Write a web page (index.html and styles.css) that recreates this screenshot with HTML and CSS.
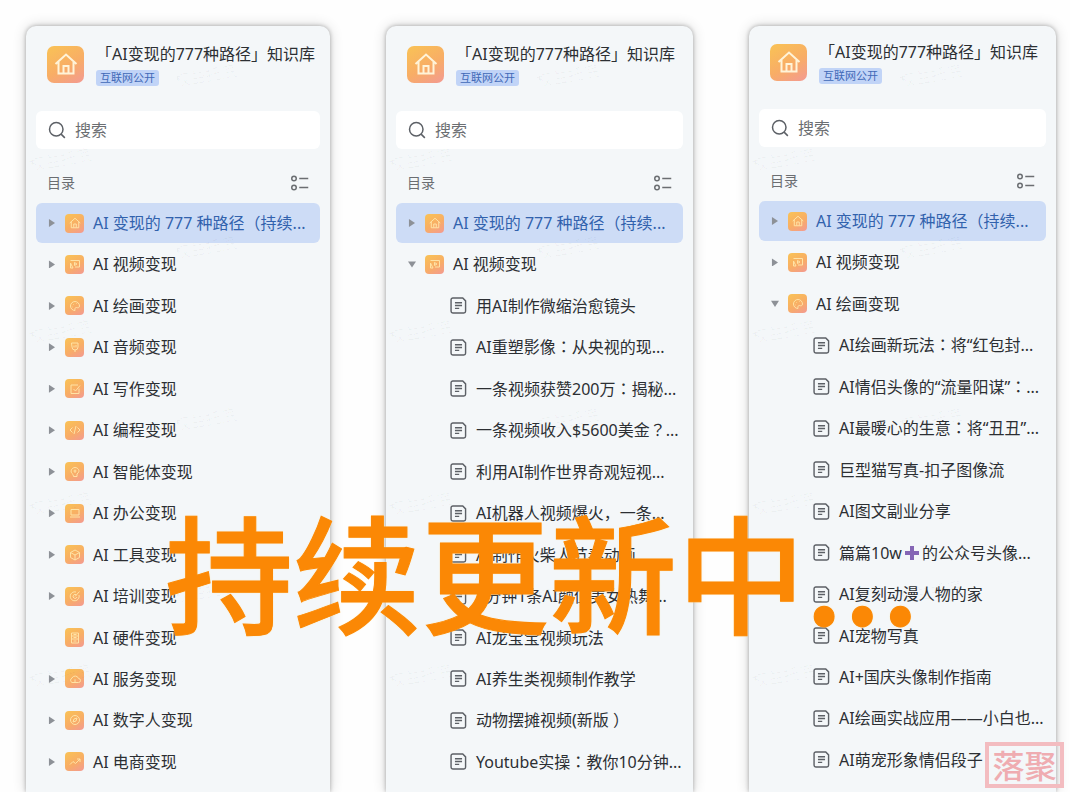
FILE: index.html
```
<!DOCTYPE html>
<html lang="zh-CN">

<head>
    <meta charset="UTF-8">
    <meta name="viewport" content="width=device-width, initial-scale=1.0">
    <title>「AI变现的777种路径」知识库</title>
    <link rel="stylesheet" href="styles.css">
</head>

<body>
    <svg class="sprite" aria-hidden="true">
        <symbol id="home" viewBox="0 0 24 24"><path d="M1.5 12 12 2.5 22.5 12M4.5 10v11.5h15V10M9.5 21v-7h5v7" /></symbol>
        <symbol id="search" viewBox="0 0 24 24"><circle cx="11" cy="11" r="9" /><path d="m17.5 17.5 5 5" /></symbol>
        <symbol id="list" viewBox="0 0 24 24"><circle cx="4" cy="6" r="3" /><circle cx="4" cy="18" r="3" /><path d="M11 6h12M11 18h12" /></symbol>
        <symbol id="doc" viewBox="0 0 24 24"><path d="M4 1.5h14l4 4V20a2.500 2.500 0 0 1-2.500 2.500H4A2.500 2.500 0 0 1 1.500 20V4A2.500 2.500 0 0 1 4 1.500zM7 8h10M7 12h10M7 16h6" /></symbol>
        <symbol id="video" viewBox="0 0 24 24"><path d="M3 5h18v13h-9M3 10v10h5zM11 9l5 3-5 3z" /></symbol>
        <symbol id="paint" viewBox="0 0 24 24"><path d="M12 21a9 9 0 1 1 9-9c0 4-4 4-6 3s-4 2-3 6zM8 9h1M14 7h1M7 14h1" /></symbol>
        <symbol id="audio" viewBox="0 0 24 24"><path d="M5 4h13v8a6 6 0 0 1-12 0zM12 18v4M10 9v4M14 8v5" /></symbol>
        <symbol id="write" viewBox="0 0 24 24"><path d="M20 11v10H4V4h14M9 12l4 4 9-11" /></symbol>
        <symbol id="code" viewBox="0 0 24 24"><path d="m7 7-5 5 5 5M17 7l5 5-5 5M14 4l-4 16" /></symbol>
        <symbol id="agent" viewBox="0 0 24 24"><path d="M8 17c-8-6-2-14 4-14s12 7 4 13v5H9zM9 10h6M12 7v7" /></symbol>
        <symbol id="office" viewBox="0 0 24 24"><path d="M4 5h16v11H4zM2 20h20" /></symbol>
        <symbol id="tool" viewBox="0 0 24 24"><path d="m12 2 9 5v10l-9 5-9-5V7zM3 7l9 5 9-5M12 12v10" /></symbol>
        <symbol id="train" viewBox="0 0 24 24"><path d="M20 10a9 9 0 1 1-6-6M15 10a4 4 0 1 0 1 4M12 13l9-10" /></symbol>
        <symbol id="hardware" viewBox="0 0 24 24"><path d="M5 2h14v20H5zM5 8h14M5 14h14M9 5h6M9 11h6M9 18h6" /></symbol>
        <symbol id="cloud" viewBox="0 0 24 24"><path d="M6 19a5 5 0 0 1 0-9 7 7 0 0 1 13 1 4 4 0 0 1 0 8zM12 12v7" /></symbol>
        <symbol id="human" viewBox="0 0 24 24"><circle cx="12" cy="12" r="9" /><path d="m16 8-2 6-6 2 2-6z" /></symbol>
        <symbol id="trend" viewBox="0 0 24 24"><path d="m2 17 6-6 5 4 9-9M16 6h6v6" /></symbol>
    </svg>

    <main class="board">
        <section class="panel">
            <div class="watermark" aria-hidden="true">
                <span>权益托底</span><span>权益托底</span><span>权益托底</span><span>权益托底</span><span>权益托底</span><span>权益托底</span><span>权益托底</span><span>权益托底</span>
            </div>
            <header class="head">
                <span class="logo"><svg><use href="#home" /></svg></span>
                <div class="head-text">
                    <h2>「AI变现的777种路径」知识库</h2>
                    <span class="badge">互联网公开</span>
                </div>
            </header>
            <label class="search">
                <svg><use href="#search" /></svg>
                <input type="text" placeholder="搜索" aria-label="搜索">
            </label>
            <div class="toc-head">
                <h3>目录</h3>
                <button type="button" aria-label="展开目录"><svg><use href="#list" /></svg></button>
            </div>
            <ul class="toc">
                <li class="active"><button class="arrow" aria-label="展开"></button><span class="icon"><svg><use href="#home" /></svg></span><a href="#">AI 变现的 777 种路径<span class="punct" lang="ja">（</span>持续...</a></li>
                <li><button class="arrow" aria-label="展开"></button><span class="icon"><svg><use href="#video" /></svg></span><a href="#">AI 视频变现</a></li>
                <li><button class="arrow" aria-label="展开"></button><span class="icon"><svg><use href="#paint" /></svg></span><a href="#">AI 绘画变现</a></li>
                <li><button class="arrow" aria-label="展开"></button><span class="icon"><svg><use href="#audio" /></svg></span><a href="#">AI 音频变现</a></li>
                <li><button class="arrow" aria-label="展开"></button><span class="icon"><svg><use href="#write" /></svg></span><a href="#">AI 写作变现</a></li>
                <li><button class="arrow" aria-label="展开"></button><span class="icon"><svg><use href="#code" /></svg></span><a href="#">AI 编程变现</a></li>
                <li><button class="arrow" aria-label="展开"></button><span class="icon"><svg><use href="#agent" /></svg></span><a href="#">AI 智能体变现</a></li>
                <li><button class="arrow" aria-label="展开"></button><span class="icon"><svg><use href="#office" /></svg></span><a href="#">AI 办公变现</a></li>
                <li><button class="arrow" aria-label="展开"></button><span class="icon"><svg><use href="#tool" /></svg></span><a href="#">AI 工具变现</a></li>
                <li><button class="arrow" aria-label="展开"></button><span class="icon"><svg><use href="#train" /></svg></span><a href="#">AI 培训变现</a></li>
                <li class="leaf"><span class="icon"><svg><use href="#hardware" /></svg></span><a href="#">AI 硬件变现</a></li>
                <li><button class="arrow" aria-label="展开"></button><span class="icon"><svg><use href="#cloud" /></svg></span><a href="#">AI 服务变现</a></li>
                <li><button class="arrow" aria-label="展开"></button><span class="icon"><svg><use href="#human" /></svg></span><a href="#">AI 数字人变现</a></li>
                <li><button class="arrow" aria-label="展开"></button><span class="icon"><svg><use href="#trend" /></svg></span><a href="#">AI 电商变现</a></li>
            </ul>
        </section>

        <section class="panel">
            <div class="watermark" aria-hidden="true">
                <span>权益托底</span><span>权益托底</span><span>权益托底</span><span>权益托底</span><span>权益托底</span><span>权益托底</span><span>权益托底</span><span>权益托底</span>
            </div>
            <header class="head">
                <span class="logo"><svg><use href="#home" /></svg></span>
                <div class="head-text">
                    <h2>「AI变现的777种路径」知识库</h2>
                    <span class="badge">互联网公开</span>
                </div>
            </header>
            <label class="search">
                <svg><use href="#search" /></svg>
                <input type="text" placeholder="搜索" aria-label="搜索">
            </label>
            <div class="toc-head">
                <h3>目录</h3>
                <button type="button" aria-label="展开目录"><svg><use href="#list" /></svg></button>
            </div>
            <ul class="toc">
                <li class="active"><button class="arrow" aria-label="展开"></button><span class="icon"><svg><use href="#home" /></svg></span><a href="#">AI 变现的 777 种路径<span class="punct" lang="ja">（</span>持续...</a></li>
                <li><button class="arrow open" aria-label="收起"></button><span class="icon"><svg><use href="#video" /></svg></span><a href="#">AI 视频变现</a></li>
                <li class="doc"><svg><use href="#doc" /></svg><a href="#">用AI制作微缩治愈镜头</a></li>
                <li class="doc"><svg><use href="#doc" /></svg><a href="#">AI重塑影像<span class="punct" lang="ja">：</span>从央视的现...</a></li>
                <li class="doc"><svg><use href="#doc" /></svg><a href="#">一条视频获赞200万<span class="punct" lang="ja">：</span>揭秘...</a></li>
                <li class="doc"><svg><use href="#doc" /></svg><a href="#">一条视频收入$5600美金<span class="punct" lang="ja">？</span>...</a></li>
                <li class="doc"><svg><use href="#doc" /></svg><a href="#">利用AI制作世界奇观短视...</a></li>
                <li class="doc"><svg><use href="#doc" /></svg><a href="#">AI机器人视频爆火，一条...</a></li>
                <li class="doc"><svg><use href="#doc" /></svg><a href="#">AI制作火柴人节奏动画</a></li>
                <li class="doc"><svg><use href="#doc" /></svg><a href="#">5分钟1条AI颜值美女热舞...</a></li>
                <li class="doc"><svg><use href="#doc" /></svg><a href="#">AI龙宝宝视频玩法</a></li>
                <li class="doc"><svg><use href="#doc" /></svg><a href="#">AI养生类视频制作教学</a></li>
                <li class="doc"><svg><use href="#doc" /></svg><a href="#">动物摆摊视频(新版 ）</a></li>
                <li class="doc"><svg><use href="#doc" /></svg><a href="#">Youtube实操<span class="punct" lang="ja">：</span>教你10分钟...</a></li>
            </ul>
        </section>

        <section class="panel raised">
            <div class="watermark" aria-hidden="true">
                <span>权益托底</span><span>权益托底</span><span>权益托底</span><span>权益托底</span><span>权益托底</span><span>权益托底</span><span>权益托底</span><span>权益托底</span>
            </div>
            <header class="head">
                <span class="logo"><svg><use href="#home" /></svg></span>
                <div class="head-text">
                    <h2>「AI变现的777种路径」知识库</h2>
                    <span class="badge">互联网公开</span>
                </div>
            </header>
            <label class="search">
                <svg><use href="#search" /></svg>
                <input type="text" placeholder="搜索" aria-label="搜索">
            </label>
            <div class="toc-head">
                <h3>目录</h3>
                <button type="button" aria-label="展开目录"><svg><use href="#list" /></svg></button>
            </div>
            <ul class="toc">
                <li class="active"><button class="arrow" aria-label="展开"></button><span class="icon"><svg><use href="#home" /></svg></span><a href="#">AI 变现的 777 种路径<span class="punct" lang="ja">（</span>持续...</a></li>
                <li><button class="arrow" aria-label="展开"></button><span class="icon"><svg><use href="#video" /></svg></span><a href="#">AI 视频变现</a></li>
                <li><button class="arrow open" aria-label="收起"></button><span class="icon"><svg><use href="#paint" /></svg></span><a href="#">AI 绘画变现</a></li>
                <li class="doc"><svg><use href="#doc" /></svg><a href="#">AI绘画新玩法<span class="punct" lang="ja">：</span>将“红包封...</a></li>
                <li class="doc"><svg><use href="#doc" /></svg><a href="#">AI情侣头像的“流量阳谋”<span class="punct" lang="ja">：</span>...</a></li>
                <li class="doc"><svg><use href="#doc" /></svg><a href="#">AI最暖心的生意<span class="punct" lang="ja">：</span>将“丑丑”...</a></li>
                <li class="doc"><svg><use href="#doc" /></svg><a href="#">巨型猫写真-扣子图像流</a></li>
                <li class="doc"><svg><use href="#doc" /></svg><a href="#">AI图文副业分享</a></li>
                <li class="doc"><svg><use href="#doc" /></svg><a href="#">篇篇10w<svg class="plus" viewBox="0 0 20 16"><path d="M10 1v14M3 8h14" /></svg>的公众号头像...</a></li>
                <li class="doc"><svg><use href="#doc" /></svg><a href="#">AI复刻动漫人物的家</a></li>
                <li class="doc"><svg><use href="#doc" /></svg><a href="#">AI宠物写真</a></li>
                <li class="doc"><svg><use href="#doc" /></svg><a href="#">AI+国庆头像制作指南</a></li>
                <li class="doc"><svg><use href="#doc" /></svg><a href="#">AI绘画实战应用——小白也...</a></li>
                <li class="doc"><svg><use href="#doc" /></svg><a href="#">AI萌宠形象情侣段子</a></li>
            </ul>
        </section>
    </main>

    <p class="banner">持续更新中...</p>
    <div class="stamp">落聚</div>
</body>

</html>
```
FILE: styles.css
```
* {
    margin: 0;
    padding: 0;
    box-sizing: border-box;
}

body {
    position: relative;
    min-height: 100vh;
    display: flex;
    overflow-x: hidden;
    background: #fefefe;
    color: #2c2f33;
    font-family: "Noto Sans", "Noto Sans CJK SC", sans-serif;
    font-size: 16px;
    line-height: 24px;
}

svg {
    flex: none;
    fill: none;
    stroke: currentColor;
    stroke-width: 2;
}

.sprite {
    position: absolute;
    width: 0;
    height: 0;
}

.board {
    flex: 1;
    display: grid;
    grid-template-columns: 304fr 307fr 307fr;
    gap: 56px;
    padding: 26px 14px 0 26px;
}

.panel {
    position: relative;
    min-width: 0;
    display: flex;
    flex-direction: column;
    padding: 16px 10px 10px;
    background: #f4f7f9;
    border-radius: 10px 10px 0 0;
    box-shadow: 0 0 4px rgba(0, 0, 0, 0.3), 0 0 14px rgba(0, 0, 0, 0.16);
}

.panel.raised {
    padding: 14px 10px 12px;
}

/* faint diagonal text over the whole panel */
.watermark {
    position: absolute;
    inset: 30px 0 0;
    display: grid;
    grid-template-columns: 1fr 1fr;
    grid-auto-rows: 172px;
    overflow: hidden;
    pointer-events: none;
    color: rgba(0, 0, 0, 0.03);
}

.watermark span {
    padding-left: 8px;
    transform: rotate(-10deg);
}

.watermark span:nth-child(odd) {
    padding-top: 84px;
    padding-left: 0;
}

.head {
    display: flex;
    align-items: center;
    gap: 12px;
    padding-left: 11px;
}

.logo,
.icon {
    flex: none;
    display: flex;
    align-items: center;
    justify-content: center;
    background: linear-gradient(150deg, #f9bf58 10%, #f8ad66 55%, #f39a93);
    color: #fff3d8;
}

.logo {
    width: 37px;
    height: 37px;
    border-radius: 7px;
}

.logo svg {
    width: 24px;
    height: 24px;
}

.head-text {
    display: flex;
    flex-direction: column;
    align-items: flex-start;
    gap: 4px;
    white-space: nowrap;
}

h2 {
    font-size: 16px;
    font-weight: 400;
}

.badge {
    padding: 0 4px;
    border-radius: 3px;
    background: #c1d4f7;
    color: #4069b8;
    font-size: 11px;
    line-height: 16px;
}

.search {
    display: flex;
    align-items: center;
    gap: 9px;
    height: 38px;
    margin-top: 25px;
    padding: 0 12px;
    border-radius: 6px;
    background: #fff;
    color: #5c6066;
}

.search svg {
    width: 18px;
    height: 18px;
}

.search input {
    flex: 1;
    min-width: 0;
    border: 0;
    outline: 0;
    background: transparent;
    color: inherit;
    font: inherit;
}

.search input::placeholder {
    color: #6b6e72;
}

.toc-head {
    display: flex;
    align-items: center;
    justify-content: space-between;
    height: 20px;
    margin: 24px 11px 10px;
    color: #6b6e72;
}

h3 {
    font-size: 14px;
    font-weight: 400;
}

button {
    border: 0;
    background: none;
    color: inherit;
}

.toc-head button {
    display: flex;
}

.toc-head svg {
    width: 18px;
    height: 18px;
}

.toc {
    flex: 1;
    display: flex;
    flex-direction: column;
    justify-content: space-between;
    list-style: none;
}

.toc li {
    display: flex;
    align-items: center;
    gap: 9px;
    height: 40px;
    padding-left: 12px;
    border-radius: 6px;
    white-space: nowrap;
}

.toc li.active {
    background: #cddcf6;
    color: #3262ad;
}

.toc li.leaf {
    padding-left: 29px;
}

.toc li.doc {
    padding-left: 54px;
}

.toc a {
    color: inherit;
    text-decoration: none;
}

/* colon and question mark sit in the middle of their cell */
.punct {
    font-family: "Noto Sans CJK JP", sans-serif;
    line-height: 1;
}

.doc > svg {
    width: 17px;
    height: 17px;
    color: #5c6066;
}

.arrow {
    flex: none;
    width: 8px;
    height: 8px;
    background: #8d9197;
    clip-path: polygon(12% 0, 88% 50%, 12% 100%);
}

.arrow.open {
    clip-path: polygon(0 12%, 100% 12%, 50% 88%);
}

.icon {
    width: 19px;
    height: 19px;
    border-radius: 4px;
    color: #ffe3a6;
}

.icon svg {
    width: 12px;
    height: 12px;
}

.plus {
    width: 20px;
    height: 16px;
    vertical-align: -2px;
    stroke: #8566b5;
    stroke-width: 4;
}

.banner {
    position: absolute;
    top: 506px;
    left: 165px;
    color: #fb8805;
    font-family: "Noto Sans CJK SC", sans-serif;
    font-size: 128px;
    font-weight: 500;
    line-height: 128px;
    white-space: nowrap;
    -webkit-text-stroke: 1px #fb8805;
    text-shadow: 0 0 2px #ffe7a8;
    pointer-events: none;
}

.stamp {
    position: absolute;
    right: 6px;
    bottom: 4px;
    width: 79px;
    height: 46px;
    border: 4px solid #f3bcc0;
    color: #efacb1;
    font-family: "Noto Sans CJK SC", sans-serif;
    font-size: 32px;
    font-weight: 500;
    line-height: 36px;
    text-align: center;
}
```
